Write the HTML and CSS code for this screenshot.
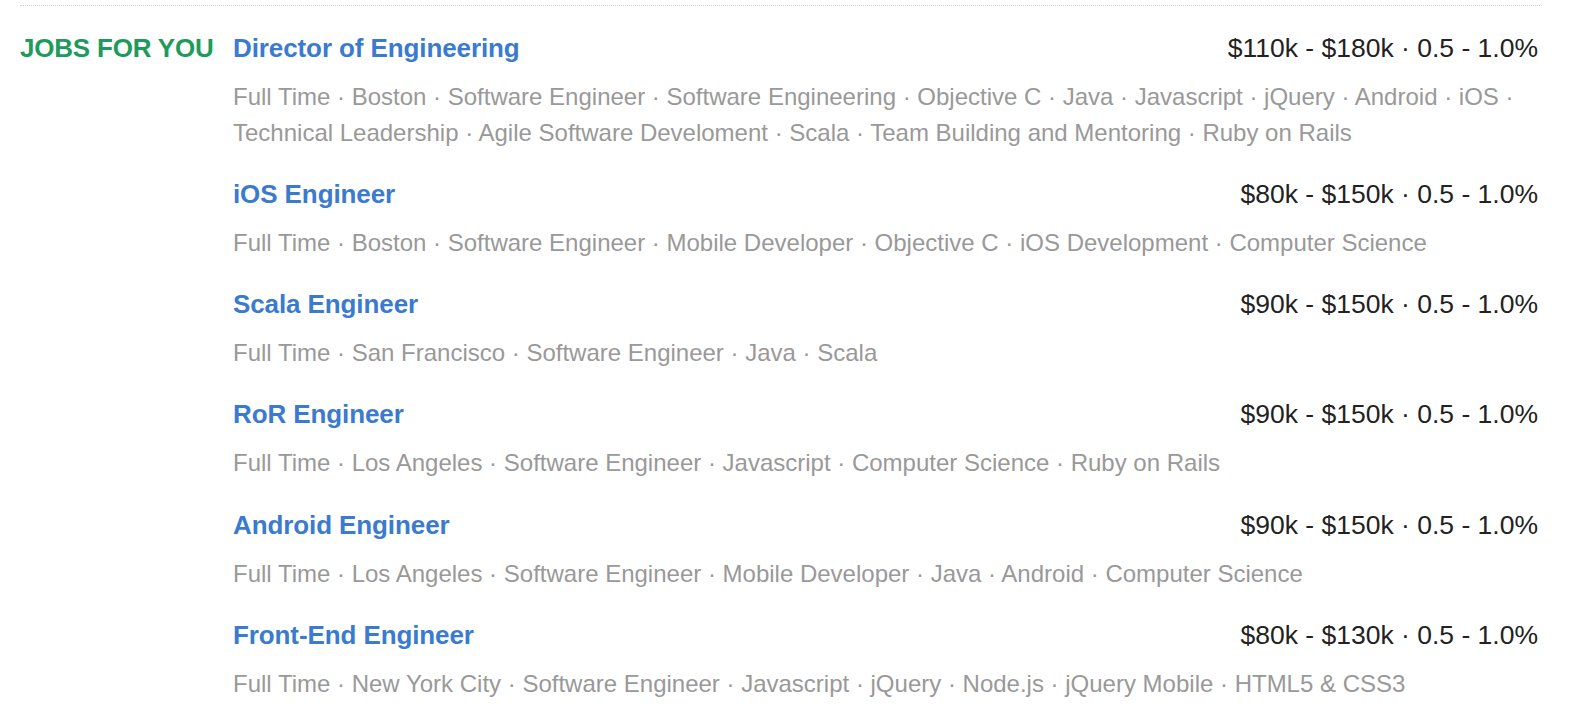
FILE: index.html
```html
<!DOCTYPE html>
<html>
<head>
<meta charset="utf-8">
<link rel="stylesheet" href="styles.css">
</head>
<body>
<section class="jobs">
  <h2 class="label">JOBS FOR YOU</h2>
  <div class="list">
    <div class="job">
      <div class="head"><a class="title" href="#">Director of Engineering</a><span class="pay">$110k - $180k · 0.5 - 1.0%</span></div>
      <p class="meta">Full Time · Boston · Software Engineer · Software Engineering · Objective C · Java · Javascript · jQuery · Android · iOS · Technical Leadership · Agile Software Develoment · Scala · Team Building and Mentoring · Ruby on Rails</p>
    </div>
    <div class="job">
      <div class="head"><a class="title" href="#">iOS Engineer</a><span class="pay">$80k - $150k · 0.5 - 1.0%</span></div>
      <p class="meta">Full Time · Boston · Software Engineer · Mobile Developer · Objective C · iOS Development · Computer Science</p>
    </div>
    <div class="job">
      <div class="head"><a class="title" href="#">Scala Engineer</a><span class="pay">$90k - $150k · 0.5 - 1.0%</span></div>
      <p class="meta">Full Time · San Francisco · Software Engineer · Java · Scala</p>
    </div>
    <div class="job">
      <div class="head"><a class="title" href="#">RoR Engineer</a><span class="pay">$90k - $150k · 0.5 - 1.0%</span></div>
      <p class="meta">Full Time · Los Angeles · Software Engineer · Javascript · Computer Science · Ruby on Rails</p>
    </div>
    <div class="job">
      <div class="head"><a class="title" href="#">Android Engineer</a><span class="pay">$90k - $150k · 0.5 - 1.0%</span></div>
      <p class="meta">Full Time · Los Angeles · Software Engineer · Mobile Developer · Java · Android · Computer Science</p>
    </div>
    <div class="job">
      <div class="head"><a class="title" href="#">Front-End Engineer</a><span class="pay">$80k - $130k · 0.5 - 1.0%</span></div>
      <p class="meta">Full Time · New York City · Software Engineer · Javascript · jQuery · Node.js · jQuery Mobile · HTML5 &amp; CSS3</p>
    </div>
  </div>
</section>
</body>
</html>
```

FILE: styles.css
```css
html, body {
  margin: 0;
  padding: 0;
  background: #fff;
}
body {
  font-family: "Liberation Sans", Arial, Helvetica, sans-serif;
  padding: 5px 38px 0 20px;
}
.jobs {
  border-top: 1px dotted #cfcfcf;
  padding-top: 24px;
  display: grid;
  grid-template-columns: 213px 1fr;
  align-items: start;
}
.label {
  margin: 0;
  font-size: 26px;
  line-height: 36px;
  font-weight: bold;
  color: #1e9b5c;
  letter-spacing: -0.2px;
}
.list {
  display: flex;
  flex-direction: column;
  gap: 25.8px;
  padding-right: 2px;
}
.head {
  display: flex;
  justify-content: space-between;
  align-items: baseline;
  line-height: 36px;
}
.title {
  font-size: 26px;
  font-weight: bold;
  color: #3a7bd0;
  text-decoration: none;
  letter-spacing: -0.1px;
}
.pay {
  font-size: 26.5px;
  color: #222;
}
.meta {
  margin: 13px 0 0;
  font-size: 24px;
  line-height: 35.5px;
  color: #999;
}
```
